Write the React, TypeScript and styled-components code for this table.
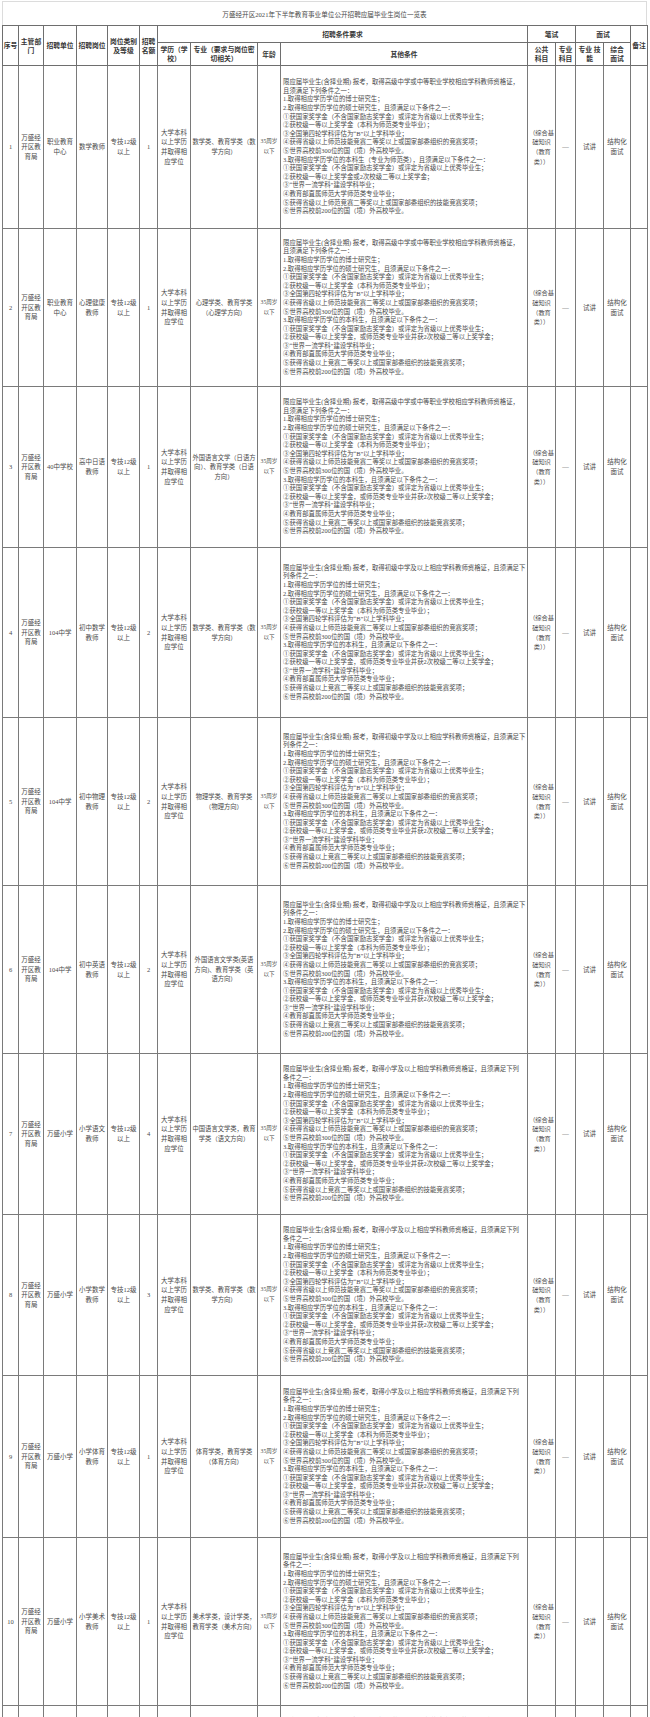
import React from "react";
import styled, { createGlobalStyle } from "styled-components";

const GlobalStyle = createGlobalStyle`
  html, body {
    margin: 0;
    padding: 0;
    background: #fff;
  }
  body {
    font-family: "Liberation Serif", "Noto Sans CJK SC", serif;
    color: #4a4a4a;
  }
`;

const Page = styled.div`
  width: 650px;
  padding: 1px 3px 0 2px;
  box-sizing: border-box;
`;

const Title = styled.div`
  height: 23px;
  border: 1px solid #dcdcdc;
  border-bottom: none;
  display: flex;
  align-items: center;
  justify-content: center;
  font-size: 6.6px;
  color: #4a4a4a;
`;

const Table = styled.table`
  width: 645px;
  table-layout: fixed;
  border-collapse: collapse;
`;

const Row = styled.tr<{ $h: number }>`
  height: ${({ $h }) => $h}px;
`;

const HeadCell = styled.th`
  border: 1px solid #6e6e6e;
  padding: 0;
  font-size: 6.8px;
  line-height: 9px;
  font-weight: 700;
  color: #363636;
  text-align: center;
  vertical-align: middle;
  white-space: pre-line;
`;

const Cell = styled.td<{ $fs?: number }>`
  border: 1px solid #7a7a7a;
  padding: 0;
  font-size: ${({ $fs }) => $fs ?? 6.5}px;
  line-height: 9.6px;
  text-align: center;
  vertical-align: middle;
  white-space: pre;
  color: #4a4a4a;
`;

const CondCell = styled.td`
  border: 1px solid #7a7a7a;
  padding: 0 2px;
  font-size: 6.4px;
  line-height: 8.6px;
  text-align: left;
  vertical-align: middle;
  color: #4a4a4a;
`;

const Line = styled.div`
  white-space: nowrap;
`;

const widths = [16, 25, 33, 31, 32, 18, 33, 67, 23, 247, 28, 20, 28, 27, 17];

const tail = [
  "1.取得相应学历学位的博士研究生；",
  "2.取得相应学历学位的硕士研究生，且须满足以下条件之一：",
  "①获国家奖学金（不含国家励志奖学金）或评定为省级以上优秀毕业生；",
  "②获校级一等以上奖学金（本科为师范类专业毕业）；",
  "③全国第四轮学科评估为“B”以上学科毕业；",
  "④获得省级以上师范技能竞赛二等奖以上或国家部委组织的竞赛奖项；",
  "⑤世界高校前300位的国（境）外高校毕业。",
];

const undergrad = [
  "3.取得相应学历学位的本科生，且须满足以下条件之一：",
  "①获国家奖学金（不含国家励志奖学金）或评定为省级以上优秀毕业生；",
  "②获校级一等以上奖学金，或师范类专业毕业并获2次校级二等以上奖学金；",
  "③“世界一流学科”建设学科毕业；",
  "④教育部直属师范大学师范类专业毕业；",
  "⑤获得省级以上竞赛二等奖以上或国家部委组织的技能竞赛奖项；",
  "⑥世界高校前200位的国（境）外高校毕业。",
];

const seniorFirst = [
  "限应届毕业生(含择业期) 报考，取得高级中学或中等职业学校相应学科教师资格证，",
  "且须满足下列条件之一：",
  ...tail,
  "3.取得相应学历学位的本科生（专业为师范类），且须满足以下条件之一：",
  "①获国家奖学金（不含国家励志奖学金）或评定为省级以上优秀毕业生；",
  "②获校级一等以上奖学金或2次校级二等以上奖学金；",
  "③“世界一流学科”建设学科毕业；",
  "④教育部直属师范大学师范类专业毕业；",
  "⑤获得省级以上师范竞赛二等奖以上或国家部委组织的技能竞赛奖项；",
  "⑥世界高校前200位的国（境）外高校毕业。",
];

const senior = [
  "限应届毕业生(含择业期) 报考，取得高级中学或中等职业学校相应学科教师资格证，",
  "且须满足下列条件之一：",
  ...tail,
  ...undergrad,
];

const junior = [
  "限应届毕业生(含择业期) 报考，取得初级中学及以上相应学科教师资格证，且须满足下",
  "列条件之一：",
  ...tail,
  ...undergrad,
];

const primary = [
  "限应届毕业生(含择业期) 报考，取得小学及以上相应学科教师资格证，且须满足下列",
  "条件之一：",
  ...tail,
  ...undergrad,
];

interface Post {
  no: string;
  unit: string;
  post: string;
  count: string;
  major: string;
  cond: string[];
  h: number;
}

const posts: Post[] = [
  { no: "1", unit: "职业教育\n中心", post: "数学教师", count: "1", major: "数学类、教育学类（数\n学方向）", cond: seniorFirst, h: 163 },
  { no: "2", unit: "职业教育\n中心", post: "心理健康\n教师", count: "1", major: "心理学类、教育学类\n（心理学方向）", cond: senior, h: 158 },
  { no: "3", unit: "40中学校", post: "高中日语\n教师", count: "1", major: "外国语言文学（日语方\n向）、教育学类（日语\n方向）", cond: senior, h: 161 },
  { no: "4", unit: "104中学", post: "初中数学\n教师", count: "2", major: "数学类、教育学类（数\n学方向）", cond: junior, h: 170 },
  { no: "5", unit: "104中学", post: "初中物理\n教师", count: "2", major: "物理学类、教育学类\n（物理方向）", cond: junior, h: 168 },
  { no: "6", unit: "104中学", post: "初中英语\n教师", count: "2", major: "外国语言文学类(英语\n方向)、教育学类（英\n语方向）", cond: junior, h: 168 },
  { no: "7", unit: "万盛小学", post: "小学语文\n教师", count: "4", major: "中国语言文学类，教育\n学类（语文方向）", cond: primary, h: 161 },
  { no: "8", unit: "万盛小学", post: "小学数学\n教师", count: "3", major: "数学类、教育学类（数\n学方向）", cond: primary, h: 161 },
  { no: "9", unit: "万盛小学", post: "小学体育\n教师", count: "1", major: "体育学类，教育学类\n（体育方向）", cond: primary, h: 162 },
  { no: "10", unit: "万盛小学", post: "小学美术\n教师", count: "1", major: "美术学类，设计学类，\n教育学类（美术方向）", cond: primary, h: 168 },
  { no: "11", unit: "万盛小学", post: "小学音乐\n教师", count: "1", major: "音乐与舞蹈学类，教育\n学类（音乐方向）", cond: primary, h: 160 },
];

export default function App() {
  return (
    <Page>
      <GlobalStyle />
      <Title>万盛经开区2021年下半年教育事业单位公开招聘应届毕业生岗位一览表</Title>
      <Table>
        <colgroup>
          {widths.map((w, i) => (
            <col key={i} style={{ width: w }} />
          ))}
        </colgroup>
        <thead>
          <Row $h={17}>
            <HeadCell rowSpan={2}>序号</HeadCell>
            <HeadCell rowSpan={2}>{"主管部\n门"}</HeadCell>
            <HeadCell rowSpan={2}>招聘单位</HeadCell>
            <HeadCell rowSpan={2}>招聘岗位</HeadCell>
            <HeadCell rowSpan={2}>{"岗位类别\n及等级"}</HeadCell>
            <HeadCell rowSpan={2}>{"招聘\n名额"}</HeadCell>
            <HeadCell colSpan={4}>招聘条件要求</HeadCell>
            <HeadCell colSpan={2}>笔试</HeadCell>
            <HeadCell colSpan={2}>面试</HeadCell>
            <HeadCell rowSpan={2}>备注</HeadCell>
          </Row>
          <Row $h={23}>
            <HeadCell>{"学历（学\n校）"}</HeadCell>
            <HeadCell>{"专业（要求与岗位密\n切相关）"}</HeadCell>
            <HeadCell>年龄</HeadCell>
            <HeadCell>其他条件</HeadCell>
            <HeadCell>{"公共\n科目"}</HeadCell>
            <HeadCell>{"专业\n科目"}</HeadCell>
            <HeadCell>{"专业 技\n能"}</HeadCell>
            <HeadCell>{"综合\n面试"}</HeadCell>
          </Row>
        </thead>
        <tbody>
          {posts.map((p) => (
            <Row key={p.no} $h={p.h}>
              <Cell>{p.no}</Cell>
              <Cell>{"万盛经\n开区教\n育局"}</Cell>
              <Cell>{p.unit}</Cell>
              <Cell>{p.post}</Cell>
              <Cell>{"专技12级\n以上"}</Cell>
              <Cell>{p.count}</Cell>
              <Cell>{"大学本科\n以上学历\n并取得相\n应学位"}</Cell>
              <Cell $fs={6.3}>{p.major}</Cell>
              <Cell $fs={5.6}>{"35周岁\n以下"}</Cell>
              <CondCell>
                {p.cond.map((l, i) => (
                  <Line key={i}>{l}</Line>
                ))}
              </CondCell>
              <Cell $fs={6.2}>{"（综合基\n础知识\n（教育\n类））"}</Cell>
              <Cell>—</Cell>
              <Cell>试讲</Cell>
              <Cell>{"结构化\n面试"}</Cell>
              <Cell />
            </Row>
          ))}
        </tbody>
      </Table>
    </Page>
  );
}
